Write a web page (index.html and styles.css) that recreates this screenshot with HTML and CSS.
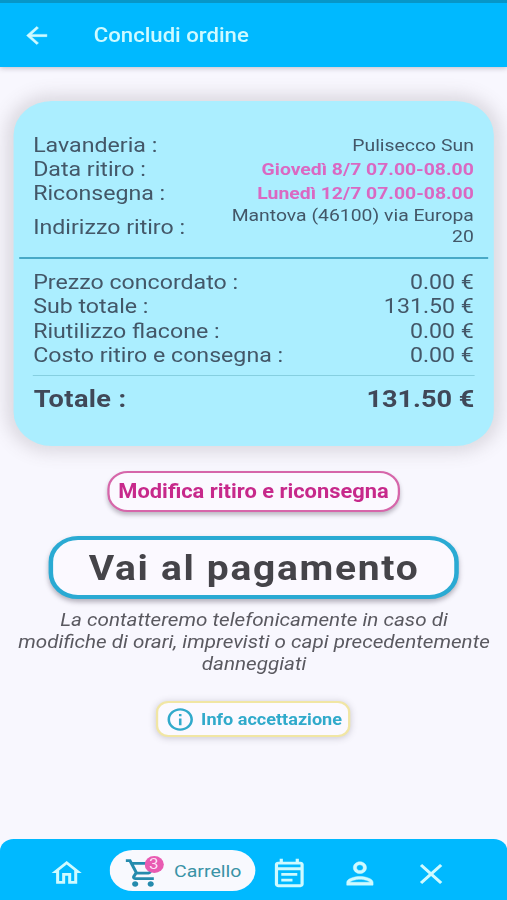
FILE: index.html
```html
<!DOCTYPE html>
<html lang="it">
<head>
<meta charset="utf-8">
<title>Concludi ordine</title>
<link rel="stylesheet" href="styles.css">
</head>
<body>
<div class="screen">
  <header class="topbar">
    <svg class="back" viewBox="0 0 24 24"><path d="M20 11H7.83l5.59-5.59L12 4l-8 8 8 8 1.41-1.41L7.83 13H20z"/></svg>
    <h1>Concludi ordine</h1>
  </header>
  <main>
    <section class="card">
      <div class="row"><span class="label">Lavanderia :</span><span class="value">Pulisecco Sun</span></div>
      <div class="row"><span class="label">Data ritiro :</span><span class="value date">Giovedì 8/7 07.00-08.00</span></div>
      <div class="row"><span class="label">Riconsegna :</span><span class="value date">Lunedì 12/7 07.00-08.00</span></div>
      <div class="row address"><span class="label">Indirizzo ritiro :</span><span class="value">Mantova (46100) via Europa<br>20</span></div>
      <hr class="wide">
      <div class="row"><span class="label">Prezzo concordato :</span><span class="price">0.00 €</span></div>
      <div class="row"><span class="label">Sub totale :</span><span class="price">131.50 €</span></div>
      <div class="row"><span class="label">Riutilizzo flacone :</span><span class="price">0.00 €</span></div>
      <div class="row"><span class="label">Costo ritiro e consegna :</span><span class="price">0.00 €</span></div>
      <hr class="thin">
      <div class="row total"><span class="total-label">Totale :</span><span>131.50 €</span></div>
    </section>
    <button class="edit">Modifica ritiro e riconsegna</button>
    <button class="pay">Vai al pagamento</button>
    <p class="note">La contatteremo telefonicamente in caso di<br>modifiche di orari, imprevisti o capi precedentemente<br>danneggiati</p>
    <button class="info">
      <svg viewBox="0 0 24 24"><path d="M11 7h2v2h-2zm0 4h2v6h-2zm1-9C6.480 2 2 6.480 2 12s4.480 10 10 10 10-4.480 10-10S17.520 2 12 2zm0 18c-4.410 0-8-3.590-8-8s3.590-8 8-8 8 3.590 8 8-3.590 8-8 8z"/></svg>
      <span>Info accettazione</span>
    </button>
  </main>
  <nav class="tabs">
    <svg class="home" viewBox="0 0 24 24"><path d="M12 5.690l5 4.500V18h-2v-6H9v6H7v-7.810l5-4.500M12 3L2 12h3v8h6v-6h2v6h6v-8h3L12 3z"/></svg>
    <div class="active">
      <span class="cart">
        <svg viewBox="0 0 24 24"><path d="M15.550 13c.75 0 1.410-.41 1.750-1.030l3.580-6.490A.996.996 0 0 0 20.010 4H5.210l-.94-2H1v2h2l3.600 7.590-1.350 2.440C4.520 15.370 5.480 17 7 17h12v-2H7l1.100-2h7.450zM6.160 6h12.150l-2.760 5H8.530L6.160 6zM7 18c-1.100 0-1.990.9-1.990 2S5.900 22 7 22s2-.9 2-2-.9-2-2-2zm10 0c-1.100 0-1.990.9-1.990 2s.89 2 1.990 2 2-.9 2-2-.9-2-2-2z"/></svg>
        <span class="badge">3</span>
      </span>
      <span>Carrello</span>
    </div>
    <svg class="calendar" viewBox="0 0 24 24"><path d="M19 4h-1V2h-2v2H8V2H6v2H5c-1.110 0-2 .9-2 2v14c0 1.100.89 2 2 2h14c1.100 0 2-.9 2-2V6c0-1.100-.9-2-2-2zm0 16H5V10h14v10zm0-12H5V6h14v2zM7 12h10v2H7zm0 4h7v2H7z"/></svg>
    <svg class="person" viewBox="0 0 24 24"><path d="M12 6c1.100 0 2 .9 2 2s-.9 2-2 2-2-.9-2-2 .9-2 2-2m0 10c2.700 0 5.800 1.290 6 2H6c.23-.72 3.310-2 6-2m0-12C9.790 4 8 5.790 8 8s1.790 4 4 4 4-1.790 4-4-1.790-4-4-4zm0 10c-2.670 0-8 1.340-8 4v2h16v-2c0-2.660-5.330-4-8-4z"/></svg>
    <svg class="close" viewBox="0 0 24 24"><path d="M19 6.410L17.590 5 12 10.590 6.410 5 5 6.410 10.590 12 5 17.590 6.410 19 12 13.410 17.590 19 19 17.590 13.410 12z"/></svg>
  </nav>
</div>
</body>
</html>
```

FILE: styles.css
```css
* { box-sizing: border-box; }

html, body { margin: 0; width: 507px; height: 900px; overflow: hidden; background: #f8f7fe; }

/* The screen is laid out on a narrow canvas and widened to fill the window. */
.screen {
  --wide: 1.13;
  width: calc(507px / var(--wide));
  height: 900px;
  display: flex;
  flex-direction: column;
  transform: scaleX(var(--wide));
  transform-origin: 0 0;
  font-family: Roboto, "Liberation Sans", sans-serif;
  color: #435768;
  white-space: nowrap;
}

svg { display: block; fill: currentColor; flex: none; }

.topbar {
  flex: none;
  height: 67px;
  border-top: 3px solid #0796c8;
  background: #00b9ff;
  display: flex;
  align-items: center;
  padding-left: 19px;
  color: #cffaff;
  box-shadow: 0 1px 5px rgba(60, 50, 70, .3);
}
.back { width: 27px; height: 27px; stroke: currentColor; stroke-width: .4; }
.topbar h1 { margin: 1px 0 0 37px; font-size: 19.600px; font-weight: 500; line-height: 24px; }

main { flex: 1; display: flex; flex-direction: column; align-items: center; }

.card {
  width: 425px;
  height: 345px;
  margin-top: 34px;
  padding: 32px 17px 0;
  border-radius: 34px;
  background: #abeeff;
  box-shadow: 0 0 16px 6px rgba(90, 80, 85, .18);
}
.row { display: flex; justify-content: space-between; align-items: center; height: 24.200px; }
.label, .price { font-size: 20.500px; line-height: 24px; }
.label { margin-left: .5px; }
.price { margin-right: .5px; }
.value { font-size: 17.150px; line-height: 21px; text-align: right; margin-right: .5px; }
.date { font-weight: 700; color: #da68c2; }
.address { height: 42.500px; }
.address .value { margin-top: -1px; }
hr { border: 0; height: 1.500px; }
.wide { margin: 9px -12px 11.500px; background: #48a9c7; }
.thin { margin: 8px 0 9px; background: #86cfe0; }
.total { height: 28px; font-size: 24px; font-weight: 700; color: #404858; }
.total-label { margin-left: 1px; letter-spacing: .35px; }

button { font-family: inherit; white-space: nowrap; padding: 0; background: #fbf9ff; display: flex; align-items: center; justify-content: center; }

.edit {
  width: 259px;
  height: 41px;
  margin: 25px 0 0;
  border: 2px solid #d666aa;
  border-radius: 18px;
  box-shadow: 0 3px 4px rgba(50, 40, 60, .3);
  color: #c7298b;
  font-size: 19.350px;
  font-weight: 700;
}
.pay {
  width: 363px;
  height: 63px;
  margin: 24px 0 0 1px;
  border: 4px solid #2aaad3;
  border-radius: 26px;
  box-shadow: 0 3px 5px rgba(50, 40, 60, .35);
  color: #454449;
  font-size: 34.500px;
  font-weight: 700;
  letter-spacing: 1.500px;
}
.note { margin: 10px 0 0 1px; font-size: 18.300px; font-style: italic; line-height: 21.800px; text-align: center; color: #5a5960; }
.info {
  width: 172px;
  height: 36px;
  margin: 27px 0 0;
  border: 2px solid #f1e6a4;
  border-radius: 11px;
  box-shadow: 0 1px 7px rgba(60, 50, 70, .25);
  color: #31aacb;
  font-size: 16px;
  font-weight: 700;
  gap: 5px;
}
.info svg { width: 27px; height: 27px; }

.tabs {
  flex: none;
  height: 61px;
  border-radius: 12px 12px 0 0;
  background: #00b9ff;
  display: flex;
  align-items: flex-start;
  color: #cffaff;
}
.home { width: 32px; height: 32px; margin: 18px 0 0 42.500px; }
.active {
  width: 129px;
  height: 41px;
  margin: 11px 0 0 22.500px;
  padding-left: 12.500px;
  border-radius: 21px;
  background: #f8f9fe;
  color: #3a93a6;
  display: flex;
  align-items: center;
  font-size: 17.300px;
}
.cart { position: relative; margin: 4px 11.500px 0 0; color: #258bad; }
.cart svg { width: 33px; height: 34px; }
.badge {
  position: absolute;
  left: 18px;
  top: 0;
  width: 17px;
  height: 17px;
  border-radius: 9px;
  background: #e95bb2;
  color: #fbe3f5;
  font-size: 15px;
  line-height: 17px;
  text-align: center;
}
.calendar { width: 34px; height: 34px; margin: 16.500px 0 0 12.500px; }
.person { width: 35px; height: 35px; margin: 17px 0 0 28px; stroke: currentColor; stroke-width: .3; }
.close { width: 35px; height: 34px; margin: 18px 0 0 28px; }
```
